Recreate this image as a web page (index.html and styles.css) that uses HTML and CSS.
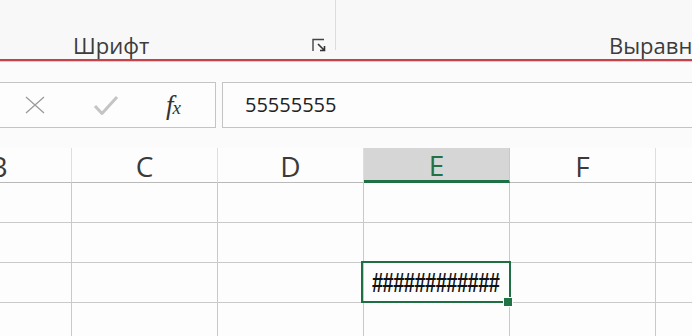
FILE: index.html
```html
<!DOCTYPE html>
<html lang="ru">
<head>
<meta charset="utf-8">
<link rel="stylesheet" href="styles.css">
</head>
<body>
<div class="ribbon">
  <div class="group font-group">
    <span class="label">Шрифт</span>
    <svg class="launcher" width="15" height="14" viewBox="0 0 15 14">
      <path d="M1 13V1.5H12" fill="none" stroke="#444" stroke-width="1.4"/>
      <path d="M6 6L12.5 12.5M8 12.5H12.5V8" fill="none" stroke="#333" stroke-width="1.6"/>
    </svg>
  </div>
  <div class="sep"></div>
  <div class="group align-group">
    <span class="label">Выравнивание</span>
  </div>
</div>

<div class="fbar">
  <div class="fbtns">
    <svg class="ico-x" width="22" height="18" viewBox="0 0 22 18">
      <path d="M2 1L20 17M20 1L2 17" stroke="#9a9a9a" stroke-width="1.3" fill="none"/>
    </svg>
    <svg class="ico-ok" width="26" height="21" viewBox="0 0 26 21">
      <path d="M2 11L9 18.5L24 2" stroke="#c4c4c4" stroke-width="3" fill="none" stroke-linejoin="round"/>
    </svg>
    <span class="fx"><span class="f">f</span><span class="x">x</span></span>
  </div>
  <div class="finput">55555555</div>
</div>

<div class="sheet">
  <div class="cell hd">B</div>
  <div class="cell hd">C</div>
  <div class="cell hd">D</div>
  <div class="cell hd hd-sel">E</div>
  <div class="cell hd">F</div>
  <div class="cell hd"></div>

  <div class="cell"></div><div class="cell"></div><div class="cell"></div><div class="cell"></div><div class="cell"></div><div class="cell"></div>
  <div class="cell"></div><div class="cell"></div><div class="cell"></div><div class="cell"></div><div class="cell"></div><div class="cell"></div>
  <div class="cell"></div><div class="cell"></div><div class="cell"></div>
  <div class="cell active"><span class="hash">############</span><span class="handle"></span></div>
  <div class="cell"></div><div class="cell"></div>
  <div class="cell"></div><div class="cell"></div><div class="cell"></div><div class="cell"></div><div class="cell"></div><div class="cell"></div>
</div>
</body>
</html>
```

FILE: styles.css
```css
* { box-sizing: border-box; }
html, body { margin: 0; padding: 0; }
body {
  width: 692px;
  height: 336px;
  overflow: hidden;
  background: #fbfbfb;
  font-family: "Open Sans", "Noto Sans", sans-serif;
  color: #444;
}

.ribbon {
  display: flex;
  height: 61px;
  background: #f8f8f8;
  border-bottom: 2px solid #c6424b;
  box-shadow: 0 1px 0 #edc3c5;
}
.group {
  display: flex;
  align-items: flex-end;
  height: 59px;
  flex-shrink: 0;
}
.font-group {
  width: 335px;
  padding-left: 73px;
}
.label {
  font-size: 22px;
  line-height: 22px;
  margin-bottom: 3px;
  color: #3c3c3c;
  white-space: nowrap;
}
.launcher {
  margin-left: auto;
  margin-right: 8px;
  margin-bottom: 7px;
}
.sep {
  width: 1px;
  height: 50px;
  background: #dcdcdc;
  flex-shrink: 0;
}
.align-group {
  padding-left: 273px;
}

.fbar {
  display: flex;
  gap: 6px;
  height: 46px;
  margin-top: 21px;
}
.fbtns {
  width: 217px;
  margin-left: -1px;
  border: 1px solid #c4c4c4;
  background: #fdfdfd;
  display: flex;
  align-items: center;
}
.ico-x { margin-left: 24px; }
.ico-ok { margin-left: 47px; }
.fx {
  margin-left: 47px;
  font-family: "Liberation Serif", serif;
  font-style: italic;
  color: #333;
  display: flex;
  align-items: baseline;
}
.fx .f { font-size: 27px; }
.fx .x { font-size: 19px; margin-left: -1px; }
.finput {
  flex: 1;
  margin-right: -2px;
  border: 1px solid #c4c4c4;
  background: #fdfdfd;
  padding-left: 22px;
  font-size: 20px;
  line-height: 44px;
  color: #222;
}

.sheet {
  display: grid;
  grid-template-columns: repeat(6, 146px);
  grid-template-rows: 35px repeat(4, 40px);
  margin-top: 20px;
  margin-left: -74px;
  background: #fdfdfd;
}
.cell {
  border-right: 1px solid #c9c9c9;
  border-bottom: 1px solid #c9c9c9;
  position: relative;
}
.hd {
  display: flex;
  justify-content: center;
  align-items: center;
  font-size: 28px;
  color: #3a3a3a;
  border-right-color: #dedede;
  border-bottom-color: #b9b9b9;
  padding-top: 2px;
}
.hd-sel {
  background: #d6d6d6;
  color: #217346;
  border-bottom: 3px solid #1e7145;
  border-right-color: #c9c9c9;
}
.active {
  display: flex;
  align-items: center;
}
.active::after {
  content: "";
  position: absolute;
  left: -3px;
  top: -2px;
  right: -2px;
  bottom: -1px;
  border: 2px solid #1e6f43;
}
.hash {
  font-family: "Liberation Sans", sans-serif;
  font-weight: bold;
  font-size: 20px;
  letter-spacing: -0.5px;
  color: #111;
  margin-left: 8px;
  margin-top: 2px;
  transform: scaleY(1.35);
}
.handle {
  position: absolute;
  left: 139px;
  top: 34px;
  width: 10px;
  height: 10px;
  background: #217346;
  border: 1px solid #fff;
  z-index: 2;
}
```
